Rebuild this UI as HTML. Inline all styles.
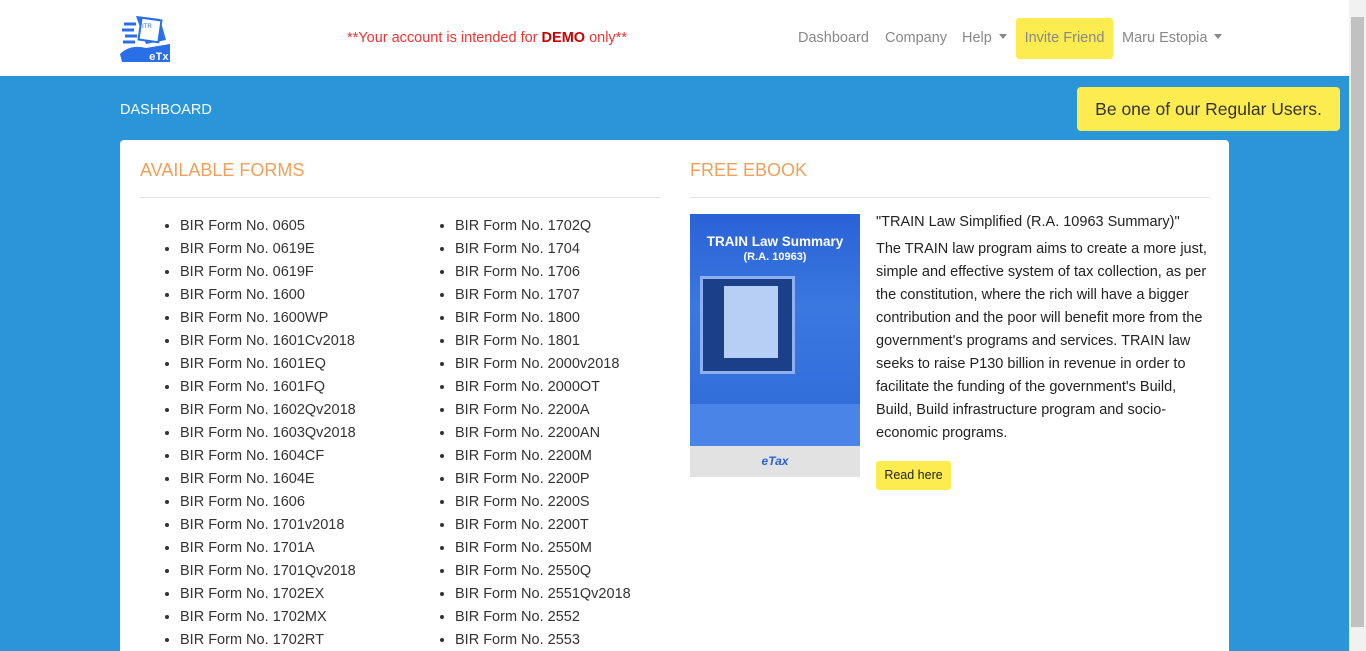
<!DOCTYPE html>
<html><head><meta charset="utf-8"><style>
*{box-sizing:border-box;margin:0;padding:0}
html,body{width:1366px;height:651px;overflow:hidden}
body{font-family:"Liberation Sans",sans-serif;background:#2a96d9;position:relative}
.nav{position:absolute;left:0;top:0;width:1349px;height:76px;background:#fff}
.sb{position:absolute;left:1349px;top:0;width:17px;height:651px;background:#f1f1f1}
.sb div{position:absolute;left:2px;top:17px;width:13px;height:610px;background:#c1c1c1}
.demo{position:absolute;left:347px;top:30px;color:#e33;font-size:14.5px}
.nl{position:absolute;top:30px;color:#888;font-size:14.5px}
.car{display:inline-block;width:0;height:0;border-left:4px solid transparent;border-right:4px solid transparent;border-top:5px solid #888;margin-left:7px;vertical-align:3px}
.inv{position:absolute;left:1016px;top:18px;width:97px;height:41px;background:#fcec50;border-radius:3px;color:#888;font-size:14.5px;line-height:41px;text-align:center}
.dash{position:absolute;left:120px;top:102px;color:#fff;font-size:14.5px}
.reg{position:absolute;left:1077px;top:87px;width:263px;height:44px;background:#fcec50;border-radius:4px;font-size:17.5px;line-height:44px;text-align:center;color:#333}
.card{position:absolute;left:120px;top:140px;width:1109px;height:511px;background:#fff;border-radius:4px 4px 0 0;overflow:hidden}
h3{position:absolute;top:20px;font-weight:normal;font-size:18px;color:#f0a05a}
.hr{position:absolute;top:57px;height:1px;background:#e3e3e3;width:520px}
ul{position:absolute;top:75px;list-style:disc;font-size:14.5px;color:#333;line-height:23px}
.t{position:absolute;left:756px;font-size:14.5px;color:#222;line-height:23px;width:340px}
.btn{position:absolute;left:756px;top:321px;width:75px;height:29px;background:#fcec50;border-radius:3px;font-size:12.5px;line-height:29px;text-align:center;color:#222}
</style></head><body>
<div class="nav">
<svg style="position:absolute;left:120px;top:14px" width="52" height="50" viewBox="0 0 52 50">
<path d="M16 2 L40 5 L46 26 L26 30 Z" fill="#2a6ee8"/>
<rect x="20" y="5" width="20" height="22" fill="#fff" stroke="#2a6ee8" stroke-width="2" transform="rotate(8 30 16)"/>
<text x="22" y="14" font-size="6" fill="#2a6ee8" font-family="Liberation Sans">ITR</text>
<path d="M4 10h12M2 16h12M5 22h12M3 28h12" stroke="#2a6ee8" stroke-width="3"/>
<path d="M0 40 Q10 30 26 34 L50 30 L50 48 L2 48 Z" fill="#2a6ee8"/>
<text x="29" y="46" font-size="11" fill="#fff" font-family="Liberation Mono" font-weight="bold">eTx</text>
</svg>
<div class="demo">**Your account is intended for <b style="color:#c00">DEMO</b> only**</div>
<div class="nl" style="left:798px">Dashboard</div>
<div class="nl" style="left:885px">Company</div>
<div class="nl" style="left:962px">Help<span class="car"></span></div>
<div class="inv">Invite Friend</div>
<div class="nl" style="left:1122px">Maru Estopia<span class="car"></span></div>
</div>
<div class="sb"><div></div></div>
<div class="dash">DASHBOARD</div>
<div class="reg">Be one of our Regular Users.</div>
<div class="card">
<h3 style="left:20px">AVAILABLE FORMS</h3><div class="hr" style="left:20px"></div>
<h3 style="left:570px">FREE EBOOK</h3><div class="hr" style="left:570px"></div>
<ul style="left:60px"><li>BIR Form No. 0605</li><li>BIR Form No. 0619E</li><li>BIR Form No. 0619F</li><li>BIR Form No. 1600</li><li>BIR Form No. 1600WP</li><li>BIR Form No. 1601Cv2018</li><li>BIR Form No. 1601EQ</li><li>BIR Form No. 1601FQ</li><li>BIR Form No. 1602Qv2018</li><li>BIR Form No. 1603Qv2018</li><li>BIR Form No. 1604CF</li><li>BIR Form No. 1604E</li><li>BIR Form No. 1606</li><li>BIR Form No. 1701v2018</li><li>BIR Form No. 1701A</li><li>BIR Form No. 1701Qv2018</li><li>BIR Form No. 1702EX</li><li>BIR Form No. 1702MX</li><li>BIR Form No. 1702RT</li></ul>
<ul style="left:335px"><li>BIR Form No. 1702Q</li><li>BIR Form No. 1704</li><li>BIR Form No. 1706</li><li>BIR Form No. 1707</li><li>BIR Form No. 1800</li><li>BIR Form No. 1801</li><li>BIR Form No. 2000v2018</li><li>BIR Form No. 2000OT</li><li>BIR Form No. 2200A</li><li>BIR Form No. 2200AN</li><li>BIR Form No. 2200M</li><li>BIR Form No. 2200P</li><li>BIR Form No. 2200S</li><li>BIR Form No. 2200T</li><li>BIR Form No. 2550M</li><li>BIR Form No. 2550Q</li><li>BIR Form No. 2551Qv2018</li><li>BIR Form No. 2552</li><li>BIR Form No. 2553</li></ul>
<div style="position:absolute;left:570px;top:74px;width:170px;height:263px;background:#e2e2e2">
<div style="height:232px;background:linear-gradient(#2a62d6,#3a78e0 40%,#2f6ad8);position:relative;overflow:hidden">
<div style="position:absolute;top:21px;width:100%;text-align:center;color:#fff;font-weight:bold;font-size:13.5px;line-height:14px">TRAIN Law Summary<br><span style="font-size:11px">(R.A. 10963)</span></div>
<div style="position:absolute;left:10px;top:62px;width:95px;height:98px;background:#1c3f8a;border:3px solid #8fb0f0"></div>
<div style="position:absolute;left:34px;top:72px;width:54px;height:72px;background:#b8cff5"></div>
<div style="position:absolute;left:0;top:190px;width:170px;height:42px;background:#4a84e6"></div>
</div>
<div style="text-align:center;font-weight:bold;font-style:italic;color:#2a62d6;font-size:12px;line-height:30px">eTax</div>
</div>
<div class="t" style="top:71px">"TRAIN Law Simplified (R.A. 10963 Summary)"</div>
<div class="t" style="top:98px">The TRAIN law program aims to create a more just, simple and effective system of tax collection, as per the constitution, where the rich will have a bigger contribution and the poor will benefit more from the government's programs and services. TRAIN law seeks to raise P130 billion in revenue in order to facilitate the funding of the government's Build, Build, Build infrastructure program and socio-economic programs.</div>
<div class="btn">Read here</div>
</div>
</body></html>
